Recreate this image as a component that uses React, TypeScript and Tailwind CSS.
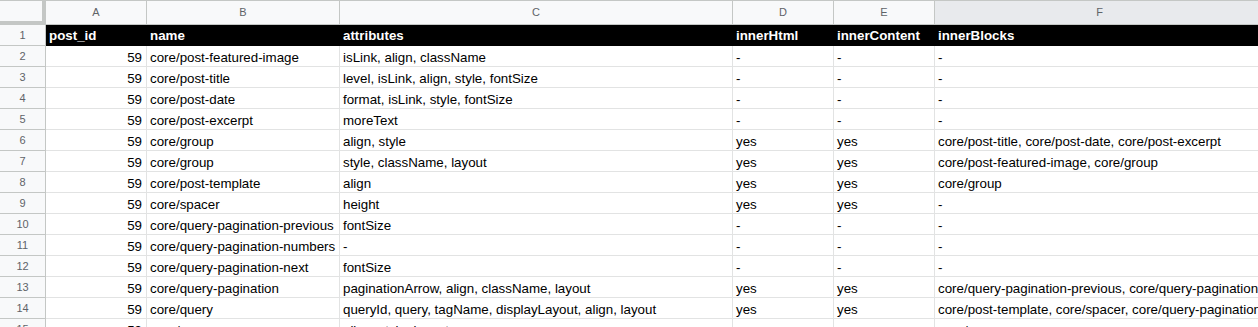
import React from "react";

type Row = [string, string, string, string, string, string];

const rows: Row[] = [
  ["59", "core/post-featured-image", "isLink, align, className", "-", "-", "-"],
  ["59", "core/post-title", "level, isLink, align, style, fontSize", "-", "-", "-"],
  ["59", "core/post-date", "format, isLink, style, fontSize", "-", "-", "-"],
  ["59", "core/post-excerpt", "moreText", "-", "-", "-"],
  ["59", "core/group", "align, style", "yes", "yes", "core/post-title, core/post-date, core/post-excerpt"],
  ["59", "core/group", "style, className, layout", "yes", "yes", "core/post-featured-image, core/group"],
  ["59", "core/post-template", "align", "yes", "yes", "core/group"],
  ["59", "core/spacer", "height", "yes", "yes", "-"],
  ["59", "core/query-pagination-previous", "fontSize", "-", "-", "-"],
  ["59", "core/query-pagination-numbers", "-", "-", "-", "-"],
  ["59", "core/query-pagination-next", "fontSize", "-", "-", "-"],
  [
    "59",
    "core/query-pagination",
    "paginationArrow, align, className, layout",
    "yes",
    "yes",
    "core/query-pagination-previous, core/query-pagination-numbers, core/query-pagination-next",
  ],
  [
    "59",
    "core/query",
    "queryId, query, tagName, displayLayout, align, layout",
    "yes",
    "yes",
    "core/post-template, core/spacer, core/query-pagination",
  ],
  ["59", "core/group", "align, style, layout", "yes", "yes", "core/query"],
];

const widths = ["w-[101px]", "w-[193px]", "w-[393px]", "w-[101px]", "w-[101px]", "w-[330px]"];
const letters = ["A", "B", "C", "D", "E", "F"];
const headers = ["post_id", "name", "attributes", "innerHtml", "innerContent", "innerBlocks"];

export default function App() {
  return (
    <div className="w-[1258px] h-[327px] overflow-hidden bg-white font-['Liberation_Sans','Arial',sans-serif] text-black">
      {/* column header row */}
      <div className="flex h-[25px] border-t border-[#c4c7c5]">
        <div className="w-[46px] shrink-0 h-full bg-[#f8f9fa] border-r-[4px] border-b-[4px] border-[#c4c7c5]"></div>
        {letters.map((l, i) => (
          <div
            key={l}
            className={`${widths[i]} shrink-0 h-full flex items-center justify-center border-r border-b border-[#c4c7c5] text-[11px] text-[#5f6368] ${
              l === "F" ? "bg-[#e8eaed]" : "bg-[#f8f9fa]"
            }`}
          >
            {l}
          </div>
        ))}
      </div>

      {/* header data row */}
      <div className="flex h-[21px]">
        <div className="w-[46px] shrink-0 h-full bg-[#f8f9fa] border-r border-b border-[#c4c7c5] flex items-center justify-center text-[11px] text-[#5f6368]">
          1
        </div>
        {headers.map((h, i) => (
          <div
            key={h}
            className={`${widths[i]} shrink-0 h-full bg-black border-b border-black flex items-end px-[3px] pb-[1px] overflow-hidden`}
          >
            <span className="text-[13.33px] leading-[16px] font-bold text-white whitespace-nowrap">{h}</span>
          </div>
        ))}
      </div>

      {rows.map((r, ri) => (
        <div key={ri} className="flex h-[21px]">
          <div className="w-[46px] shrink-0 h-full bg-[#f8f9fa] border-r border-b border-[#c4c7c5] flex items-center justify-center text-[11px] text-[#5f6368]">
            {ri + 2}
          </div>
          {r.map((c, ci) => (
            <div
              key={ci}
              className={`${widths[ci]} shrink-0 h-full border-r border-b border-[#e2e3e3] flex items-end pb-0 overflow-visible ${
                ci === 0 ? "justify-end pr-[4px] pl-[3px]" : "px-[3px]"
              }`}
            >
              <span className="text-[13.33px] leading-[16px] whitespace-nowrap">{c}</span>
            </div>
          ))}
        </div>
      ))}
    </div>
  );
}
